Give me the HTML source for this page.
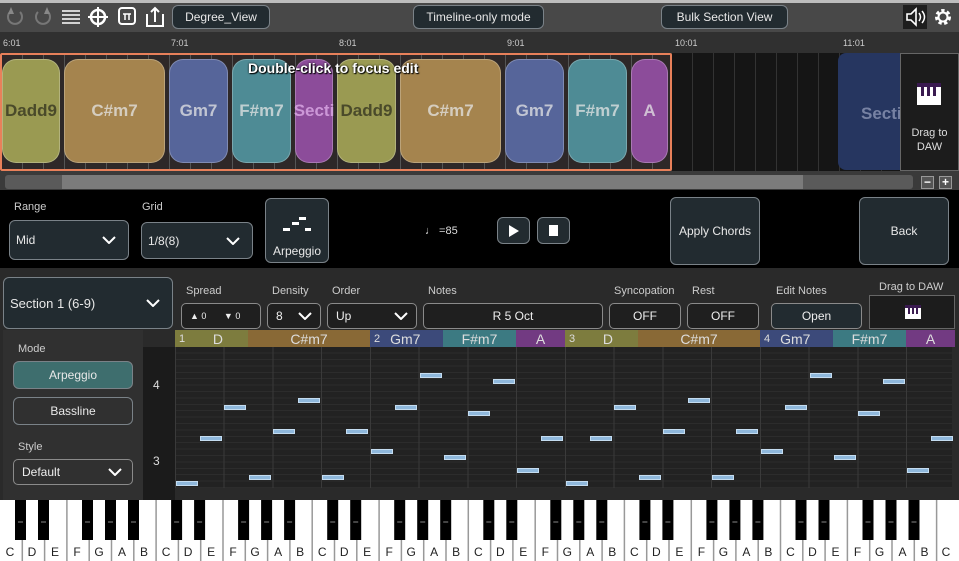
<!DOCTYPE html>
<html><head><meta charset="utf-8"><style>
*{box-sizing:border-box;margin:0;padding:0}
body{width:959px;height:561px;overflow:hidden;background:#2a2a2a;font-family:"Liberation Sans",sans-serif;color:#ddd;position:relative}
.a{position:absolute}
.btn{position:absolute;background:#222b30;border:1px solid #7a8288;border-radius:6px;color:#e8e8e8;font-size:12px;display:flex;align-items:center;justify-content:center}
.ch{position:absolute;top:59px;height:104px;border-radius:14px;border:1px solid rgba(255,255,255,.25);display:flex;align-items:center;justify-content:center;font-weight:bold;font-size:17px;color:rgba(230,230,230,.75)}
.lbl{position:absolute;font-size:11px;color:#ccc}
.dd{position:absolute;border:1px solid #8a8a8a;border-radius:5px;background:#1f1f1f;color:#eee;font-size:12px;padding-left:8px;display:flex;align-items:center}
.n{position:absolute;width:22px;height:5px;background:#8fb8dc;border:1px solid #c4dcf0}
.hd{position:absolute;top:330px;height:17px;font-size:14px;color:#ddd;display:flex;align-items:center;justify-content:center}
.cv{width:14px;height:8px}
</style></head><body>
<svg width="0" height="0" style="position:absolute"><defs><path id="chev" d="M1 1L7 7L13 1" fill="none" stroke="#fff" stroke-width="2"/></defs></svg>
<!-- toolbar -->
<div class="a" style="left:0;top:0;width:959px;height:32px;background:#484848;border-top:3px solid #bdbdbd"></div>
<svg class="a" style="left:0;top:0" width="170" height="32">
<g fill="none" stroke="#777" stroke-width="2"><path d="M10 12 A7 7 0 1 0 20 12"/><path d="M38 12 A7 7 0 1 0 48 12"/></g>
<path d="M11 7 L8 14 L14 14Z" fill="#888"/><path d="M47 7 L44 14 L50 14Z" fill="#888"/>
<g stroke="#fff" stroke-width="1.5"><path d="M62 11h18M62 15h18M62 19h18M62 23h18"/></g>
<circle cx="98" cy="17" r="7" fill="none" stroke="#fff" stroke-width="2.5"/><path d="M98 7v20M88 17h20" stroke="#fff" stroke-width="2"/>
<rect x="119" y="8" width="16" height="16" rx="3" fill="none" stroke="#fff" stroke-width="2"/><path d="M123 14h8M125 14v6M129 14v6" stroke="#fff" stroke-width="1.5"/>
<path d="M147 14v12h16v-12" fill="none" stroke="#fff" stroke-width="2"/><path d="M155 22v-14M151 12l4-4 4 4" fill="none" stroke="#fff" stroke-width="2"/>
</svg>
<div class="btn" style="left:172px;top:5px;width:98px;height:24px">Degree_View</div>
<div class="btn" style="left:413px;top:5px;width:131px;height:24px">Timeline-only mode</div>
<div class="btn" style="left:661px;top:5px;width:127px;height:24px">Bulk Section View</div>
<div class="a" style="left:903px;top:5px;width:24px;height:24px;background:#1e1e1e"></div>
<svg class="a" style="left:903px;top:5px" width="56" height="24"><path d="M4 9h4l5-5v16l-5-5H4z" fill="none" stroke="#fff" stroke-width="1.6"/><path d="M16 8q3 4 0 8M19 6q5 6 0 12" fill="none" stroke="#fff" stroke-width="1.5"/>
<circle cx="40" cy="12" r="6" fill="none" stroke="#fff" stroke-width="4" stroke-dasharray="3 2.3"/><circle cx="40" cy="12" r="4.5" fill="none" stroke="#fff" stroke-width="2"/></svg>
<!-- ruler -->
<div class="a" style="left:0;top:32px;width:959px;height:21px;background:#303030"></div>
<div class="lbl" style="left:3px;top:38px;font-size:9px">6:01</div><div class="lbl" style="left:171px;top:38px;font-size:9px">7:01</div><div class="lbl" style="left:339px;top:38px;font-size:9px">8:01</div><div class="lbl" style="left:507px;top:38px;font-size:9px">9:01</div><div class="lbl" style="left:675px;top:38px;font-size:9px">10:01</div><div class="lbl" style="left:843px;top:38px;font-size:9px">11:01</div>
<!-- timeline track -->
<div class="a" style="left:0;top:53px;width:959px;height:118px;background:#151515;background-image:repeating-linear-gradient(90deg,transparent 0 20px,#333 20px 21px)"></div>
<div class="a" style="left:0;top:53px;width:672px;height:118px;background:#2e2828;border:2px solid #e8805a;border-radius:2px;background-image:repeating-linear-gradient(90deg,transparent 0 20px,#555 20px 21px)"></div>
<div class="ch" style="left:2px;width:58px;background:#9a9a52;color:#4a4a2a">Dadd9</div>
<div class="ch" style="left:64px;width:101px;background:#a5844e">C#m7</div>
<div class="ch" style="left:169px;width:59px;background:#56659a">Gm7</div>
<div class="ch" style="left:232px;width:59px;background:#4e8b95">F#m7</div>
<div class="ch" style="left:295px;width:38px;background:#8c4c9a;color:rgba(220,170,230,.8)">Secti</div>
<div class="ch" style="left:337px;width:59px;background:#9a9a52;color:#4a4a2a">Dadd9</div>
<div class="ch" style="left:400px;width:101px;background:#a5844e">C#m7</div>
<div class="ch" style="left:505px;width:59px;background:#56659a">Gm7</div>
<div class="ch" style="left:568px;width:59px;background:#4e8b95">F#m7</div>
<div class="ch" style="left:631px;width:37px;background:#8c4c9a">A</div>
<div class="a" style="left:248px;top:60px;font-size:14px;font-weight:bold;color:#fff;text-shadow:0 0 2px #000,1px 1px 1px #000">Double-click to focus edit</div>
<div class="a" style="left:838px;top:53px;width:64px;height:117px;background:#263660;border-radius:8px 0 0 8px;color:rgba(140,150,180,.8);font-weight:bold;font-size:17px;padding-left:23px;padding-top:51px">Secti</div>
<div class="a" style="left:900px;top:53px;width:59px;height:118px;background:#1c1c1c;border:1px solid #666;font-size:11px;color:#ddd;text-align:center;padding-top:72px;line-height:14px">Drag to<br>DAW</div>
<svg class="a" style="left:917px;top:83px" width="24" height="24"><rect x="0" y="0" width="24" height="22" fill="#fff"/><rect x="0" y="0" width="24" height="4" fill="#3a1a50"/><g fill="#3a1a50"><rect x="4" y="4" width="3" height="9"/><rect x="10" y="4" width="3" height="9"/><rect x="16" y="4" width="3" height="9"/></g></svg>
<!-- scrollbar -->
<div class="a" style="left:0;top:171px;width:959px;height:19px;background:#3a3a3a"></div>
<div class="a" style="left:5px;top:175px;width:908px;height:14px;background:#5a5a5a;border-radius:3px"></div>
<div class="a" style="left:62px;top:175px;width:741px;height:14px;background:#7b7b7b"></div>
<div class="a" style="left:921px;top:176px;width:13px;height:13px;background:#555;border:1px solid #999;color:#fff;font-size:12px;line-height:10px;text-align:center;font-weight:bold">−</div>
<div class="a" style="left:939px;top:176px;width:13px;height:13px;background:#555;border:1px solid #999;color:#fff;font-size:12px;line-height:10px;text-align:center;font-weight:bold">+</div>
<!-- controls -->
<div class="a" style="left:0;top:190px;width:959px;height:78px;background:#000"></div>
<div class="lbl" style="left:14px;top:201px">Range</div><div class="lbl" style="left:142px;top:201px">Grid</div>
<div class="btn" style="left:9px;top:220px;width:120px;height:40px;justify-content:space-between;padding:0 12px 0 6px">Mid<svg class="cv"><use href="#chev"/></svg></div>
<div class="btn" style="left:141px;top:222px;width:112px;height:37px;justify-content:space-between;padding:0 12px 0 6px">1/8(8)<svg class="cv"><use href="#chev"/></svg></div>
<div class="btn" style="left:265px;top:198px;width:64px;height:65px;flex-direction:column;justify-content:flex-end;padding-bottom:4px">
<svg width="30" height="20" style="margin-bottom:8px"><rect x="1" y="12" width="7" height="3" fill="#fff"/><rect x="10" y="6" width="7" height="3" fill="#fff"/><rect x="17" y="1" width="7" height="3" fill="#fff"/><rect x="23" y="12" width="6" height="3" fill="#fff"/></svg>Arpeggio</div>
<div class="lbl" style="left:425px;top:225px;color:#ddd">♩ =85</div>
<div class="btn" style="left:497px;top:217px;width:33px;height:27px"><svg width="10" height="12"><path d="M0 0L10 6L0 12Z" fill="#fff"/></svg></div>
<div class="btn" style="left:537px;top:217px;width:33px;height:27px"><div style="width:9px;height:11px;background:#fff"></div></div>
<div class="btn" style="left:670px;top:197px;width:90px;height:68px">Apply Chords</div>
<div class="btn" style="left:859px;top:197px;width:90px;height:68px">Back</div>
<!-- lower -->
<div class="btn" style="left:3px;top:277px;width:170px;height:52px;justify-content:space-between;padding:0 12px 0 6px;font-size:13px">Section 1 (6-9)<svg class="cv"><use href="#chev"/></svg></div>
<div class="lbl" style="left:186px;top:285px">Spread</div><div class="lbl" style="left:272px;top:285px">Density</div><div class="lbl" style="left:332px;top:285px">Order</div><div class="lbl" style="left:428px;top:285px">Notes</div><div class="lbl" style="left:614px;top:285px">Syncopation</div><div class="lbl" style="left:692px;top:285px">Rest</div><div class="lbl" style="left:776px;top:285px">Edit Notes</div><div class="lbl" style="left:879px;top:281px">Drag to DAW</div>
<div class="dd" style="left:181px;top:303px;width:80px;height:26px;font-size:9px">▲ 0 &nbsp;&nbsp;&nbsp;&nbsp;&nbsp;&nbsp;▼ 0</div>
<div class="dd" style="left:267px;top:303px;width:54px;height:26px;justify-content:space-between;padding-right:8px">8<svg class="cv"><use href="#chev"/></svg></div>
<div class="dd" style="left:327px;top:303px;width:90px;height:26px;justify-content:space-between;padding-right:8px">Up<svg class="cv"><use href="#chev"/></svg></div>
<div class="dd" style="left:423px;top:303px;width:180px;height:26px;justify-content:center;padding:0">R 5 Oct</div>
<div class="dd" style="left:609px;top:303px;width:72px;height:26px;justify-content:center;padding:0">OFF</div>
<div class="dd" style="left:687px;top:303px;width:72px;height:26px;justify-content:center;padding:0">OFF</div>
<div class="dd" style="left:771px;top:303px;width:91px;height:26px;justify-content:center;padding:0;background:#222b30">Open</div>
<div class="a" style="left:869px;top:295px;width:86px;height:34px;background:#1c1c1c;border:1px solid #666"></div>
<svg class="a" style="left:905px;top:305px" width="16" height="14"><rect width="16" height="14" fill="#fff"/><rect width="16" height="3" fill="#3a1a50"/><g fill="#3a1a50"><rect x="3" y="3" width="2" height="6"/><rect x="7" y="3" width="2" height="6"/><rect x="11" y="3" width="2" height="6"/></g></svg>
<div class="a" style="left:3px;top:330px;width:140px;height:170px;background:#303030"></div>
<div class="lbl" style="left:18px;top:343px">Mode</div>
<div class="btn" style="left:13px;top:361px;width:120px;height:28px;background:#3e6e6e;font-size:12px">Arpeggio</div>
<div class="btn" style="left:13px;top:397px;width:120px;height:28px;background:#303030;font-size:12px">Bassline</div>
<div class="lbl" style="left:18px;top:441px">Style</div>
<div class="dd" style="left:13px;top:459px;width:120px;height:26px;background:#303030;justify-content:space-between;padding-right:10px">Default<svg class="cv"><use href="#chev"/></svg></div>
<div class="a" style="left:143px;top:347px;width:32px;height:153px;background:#1b1b1b"></div>
<div class="a" style="left:153px;top:378px;font-size:12px">4</div><div class="a" style="left:153px;top:454px;font-size:12px">3</div>
<div class="a" style="left:175px;top:347px;width:777px;height:141px;background:#222;background-image:repeating-linear-gradient(0deg,#2c2c2c 0 1px,transparent 1px 6.4px)"></div>
<div class="a" style="left:175px;top:347px;width:777px;height:141px;background-image:repeating-linear-gradient(90deg,#3a3a3a 0 1px,transparent 1px 48.75px)"></div>
<div class="a" style="left:175px;top:488px;width:784px;height:12px;background:#2a2a2a"></div>
<div class="hd" style="left:175px;width:73px;background:#7d7c3e;justify-content:space-between;padding:0 25px 0 4px"><span style="font-size:11px">1</span>D</div>
<div class="hd" style="left:248px;width:122px;background:#896936">C#m7</div>
<div class="hd" style="left:370px;width:73px;background:#3c4a7a;justify-content:flex-start;padding-left:4px"><span style="font-size:11px;margin-right:10px">2</span>Gm7</div>
<div class="hd" style="left:443px;width:73px;background:#3c7a82">F#m7</div>
<div class="hd" style="left:516px;width:49px;background:#723a82">A</div>
<div class="hd" style="left:565px;width:73px;background:#7d7c3e;justify-content:space-between;padding:0 25px 0 4px"><span style="font-size:11px">3</span>D</div>
<div class="hd" style="left:638px;width:122px;background:#896936">C#m7</div>
<div class="hd" style="left:760px;width:73px;background:#3c4a7a;justify-content:flex-start;padding-left:4px"><span style="font-size:11px;margin-right:10px">4</span>Gm7</div>
<div class="hd" style="left:833px;width:73px;background:#3c7a82">F#m7</div>
<div class="hd" style="left:906px;width:49px;background:#723a82">A</div>
<div class="n" style="left:176px;top:481px"></div><div class="n" style="left:200px;top:436px"></div><div class="n" style="left:224px;top:405px"></div><div class="n" style="left:249px;top:475px"></div><div class="n" style="left:273px;top:429px"></div><div class="n" style="left:298px;top:398px"></div><div class="n" style="left:322px;top:475px"></div><div class="n" style="left:346px;top:429px"></div>
<div class="n" style="left:371px;top:449px"></div><div class="n" style="left:395px;top:405px"></div><div class="n" style="left:420px;top:373px"></div><div class="n" style="left:444px;top:455px"></div><div class="n" style="left:468px;top:411px"></div><div class="n" style="left:493px;top:379px"></div><div class="n" style="left:517px;top:468px"></div><div class="n" style="left:541px;top:436px"></div>
<div class="n" style="left:566px;top:481px"></div><div class="n" style="left:590px;top:436px"></div><div class="n" style="left:614px;top:405px"></div><div class="n" style="left:639px;top:475px"></div><div class="n" style="left:663px;top:429px"></div><div class="n" style="left:688px;top:398px"></div><div class="n" style="left:712px;top:475px"></div><div class="n" style="left:736px;top:429px"></div>
<div class="n" style="left:761px;top:449px"></div><div class="n" style="left:785px;top:405px"></div><div class="n" style="left:810px;top:373px"></div><div class="n" style="left:834px;top:455px"></div><div class="n" style="left:858px;top:411px"></div><div class="n" style="left:883px;top:379px"></div><div class="n" style="left:907px;top:468px"></div><div class="n" style="left:931px;top:436px"></div>
<!-- piano -->
<svg class="a" style="left:0;top:500px" width="959" height="61" font-family="Liberation Sans" font-size="12">
<rect width="959" height="61" fill="#fff"/>
<g id="oct">
<g stroke="#999" stroke-width="1.5"><path d="M22.3 0v61M44.6 0v61M66.9 0v61M89.2 0v61M111.5 0v61M133.8 0v61M156.1 0v61"/></g>
<g fill="#000"><rect x="15" y="0" width="11" height="40"/><rect x="38" y="0" width="11" height="40"/><rect x="82" y="0" width="11" height="40"/><rect x="105" y="0" width="11" height="40"/><rect x="128" y="0" width="11" height="40"/></g>
<g stroke="#888" stroke-width="1"><path d="M18 22h5M41 22h5M85 22h5M108 22h5M131 22h5"/></g>
<g fill="#222" text-anchor="middle"><text x="10" y="56">C</text><text x="32" y="56">D</text><text x="55" y="56">E</text><text x="77" y="56">F</text><text x="99" y="56">G</text><text x="122" y="56">A</text><text x="144" y="56">B</text></g>
</g>
<use href="#oct" x="156.1"/><use href="#oct" x="312.2"/><use href="#oct" x="468.3"/><use href="#oct" x="624.4"/><use href="#oct" x="780.5"/>
<text x="946" y="56" fill="#222" text-anchor="middle">C</text>
</svg>
</body></html>
